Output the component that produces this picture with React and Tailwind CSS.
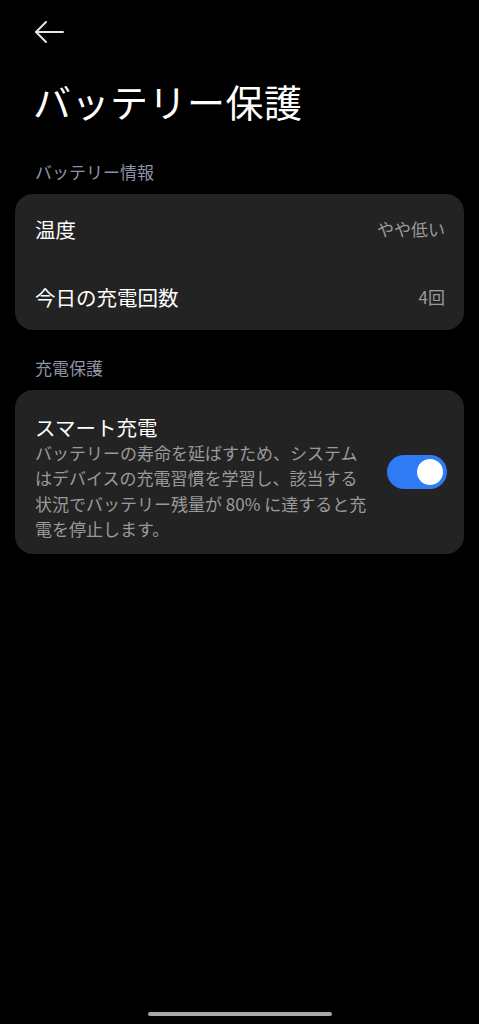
export default function App() {
  const font = { fontFamily: '"Noto Sans CJK JP", "Noto Sans", Roboto, sans-serif' };
  return (
    <div className="w-[479px] h-[1024px] bg-black text-white flex flex-col relative overflow-hidden" style={font}>
      <div className="pl-[35px] pt-[21px] h-[44px] flex items-start">
        <svg width="29" height="22" viewBox="0 0 29 22" fill="none" stroke="#e6e6e6" strokeWidth="2" strokeLinecap="round" strokeLinejoin="round">
          <path d="M1 11 H28" />
          <path d="M11 1 L1 11 L11 21" />
        </svg>
      </div>
      <h1 className="pl-[33px] mt-[32px] text-[38px] leading-[50px] font-normal tracking-[0.5px]">バッテリー保護</h1>
      <div className="pl-[35px] mt-[34px] text-[17px] leading-[24px] text-[#8e93a6]">バッテリー情報</div>
      <div className="mx-[15px] mt-[10px] rounded-[18px] bg-[#232323] flex flex-col">
        <div className="h-[68px] flex items-center justify-between pl-[20px] pr-[19px] pt-[2px]">
          <span className="text-[20.5px]">温度</span>
          <span className="text-[17px] text-[#9a9a9a]">やや低い</span>
        </div>
        <div className="h-[68px] flex items-center justify-between pl-[20px] pr-[19px] pt-[2px]">
          <span className="text-[20.5px]">今日の充電回数</span>
          <span className="text-[17px] text-[#9a9a9a]">4回</span>
        </div>
      </div>
      <div className="pl-[35px] mt-[26px] text-[17px] leading-[24px] text-[#8e93a6]">充電保護</div>
      <div className="mx-[15px] mt-[10px] rounded-[18px] bg-[#232323] flex items-start pl-[20px] pr-[19px] pt-[23px] pb-[13px]">
        <div className="flex-1 pr-[14px]">
          <div className="text-[20.5px] leading-[28px]">スマート充電</div>
          <div className="text-[17px] leading-[25.3px] text-[#9a9a9a] w-[338px] -mt-[1px]">バッテリーの寿命を延ばすため、システムはデバイスの充電習慣を学習し、該当する状況でバッテリー残量が 80% に達すると充電を停止します。</div>
        </div>
        <div className="w-[60px] h-[34px] rounded-full bg-[#2f7bf5] flex items-center justify-end pr-[4px] mt-[42px] shrink-0">
          <div className="w-[26px] h-[26px] rounded-full bg-white" />
        </div>
      </div>
      <div className="absolute left-[148px] top-[1012px] w-[184px] h-[4px] rounded-full bg-[#a8a8a8]" />
    </div>
  );
}
